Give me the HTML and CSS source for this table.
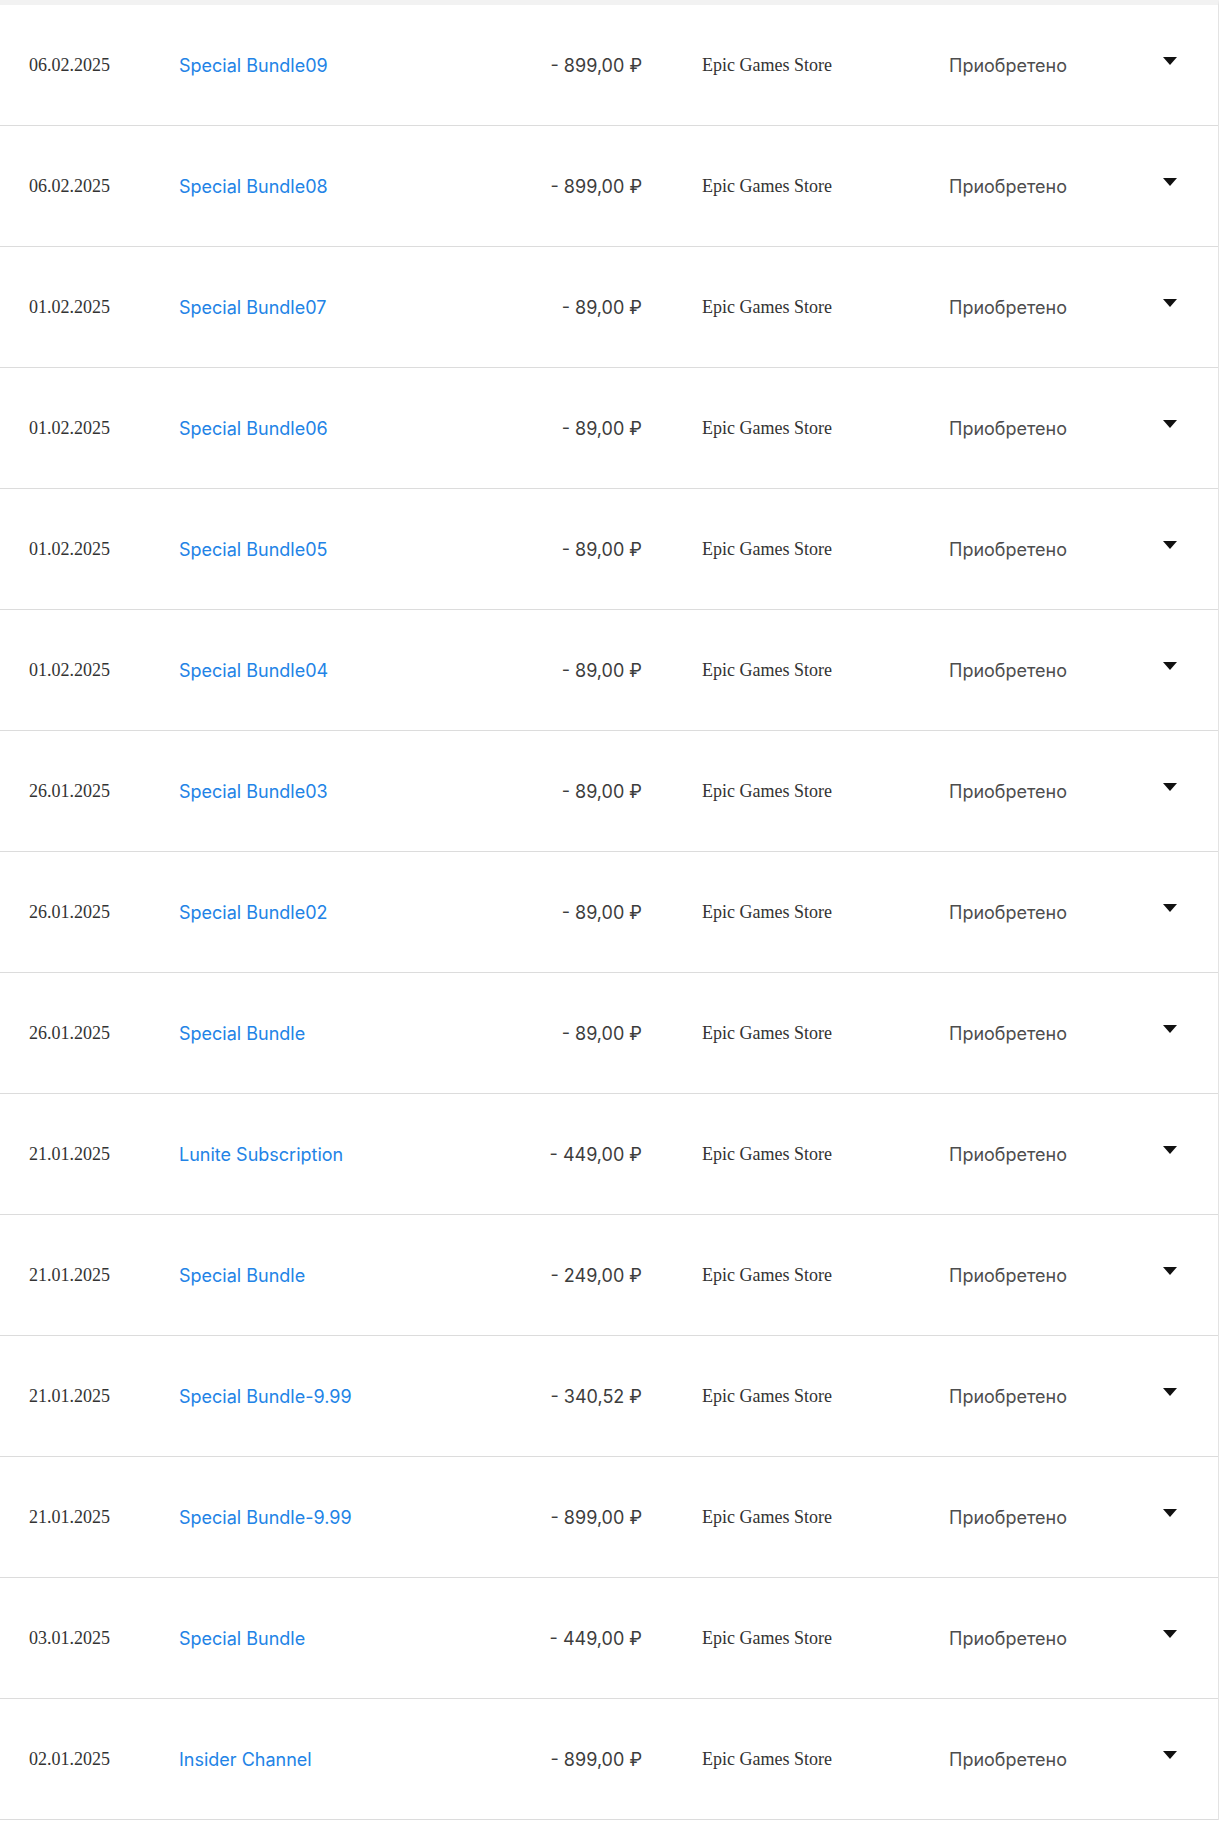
FILE: index.html
```html
<!DOCTYPE html>
<html lang="ru">
<head>
<meta charset="utf-8">
<link rel="stylesheet" href="styles.css">
</head>
<body>
<div class="list">
  <div class="row"><span class="date">06.02.2025</span><a class="name">Special Bundle09</a><span class="amount">- 899,00 ₽</span><span class="store">Epic Games Store</span><span class="status">Приобретено</span><span class="toggle"><svg width="14" height="8" viewBox="0 0 14 8"><path d="M0 0H14L7 8Z"/></svg></span></div>
  <div class="row"><span class="date">06.02.2025</span><a class="name">Special Bundle08</a><span class="amount">- 899,00 ₽</span><span class="store">Epic Games Store</span><span class="status">Приобретено</span><span class="toggle"><svg width="14" height="8" viewBox="0 0 14 8"><path d="M0 0H14L7 8Z"/></svg></span></div>
  <div class="row"><span class="date">01.02.2025</span><a class="name">Special Bundle07</a><span class="amount">- 89,00 ₽</span><span class="store">Epic Games Store</span><span class="status">Приобретено</span><span class="toggle"><svg width="14" height="8" viewBox="0 0 14 8"><path d="M0 0H14L7 8Z"/></svg></span></div>
  <div class="row"><span class="date">01.02.2025</span><a class="name">Special Bundle06</a><span class="amount">- 89,00 ₽</span><span class="store">Epic Games Store</span><span class="status">Приобретено</span><span class="toggle"><svg width="14" height="8" viewBox="0 0 14 8"><path d="M0 0H14L7 8Z"/></svg></span></div>
  <div class="row"><span class="date">01.02.2025</span><a class="name">Special Bundle05</a><span class="amount">- 89,00 ₽</span><span class="store">Epic Games Store</span><span class="status">Приобретено</span><span class="toggle"><svg width="14" height="8" viewBox="0 0 14 8"><path d="M0 0H14L7 8Z"/></svg></span></div>
  <div class="row"><span class="date">01.02.2025</span><a class="name">Special Bundle04</a><span class="amount">- 89,00 ₽</span><span class="store">Epic Games Store</span><span class="status">Приобретено</span><span class="toggle"><svg width="14" height="8" viewBox="0 0 14 8"><path d="M0 0H14L7 8Z"/></svg></span></div>
  <div class="row"><span class="date">26.01.2025</span><a class="name">Special Bundle03</a><span class="amount">- 89,00 ₽</span><span class="store">Epic Games Store</span><span class="status">Приобретено</span><span class="toggle"><svg width="14" height="8" viewBox="0 0 14 8"><path d="M0 0H14L7 8Z"/></svg></span></div>
  <div class="row"><span class="date">26.01.2025</span><a class="name">Special Bundle02</a><span class="amount">- 89,00 ₽</span><span class="store">Epic Games Store</span><span class="status">Приобретено</span><span class="toggle"><svg width="14" height="8" viewBox="0 0 14 8"><path d="M0 0H14L7 8Z"/></svg></span></div>
  <div class="row"><span class="date">26.01.2025</span><a class="name">Special Bundle</a><span class="amount">- 89,00 ₽</span><span class="store">Epic Games Store</span><span class="status">Приобретено</span><span class="toggle"><svg width="14" height="8" viewBox="0 0 14 8"><path d="M0 0H14L7 8Z"/></svg></span></div>
  <div class="row"><span class="date">21.01.2025</span><a class="name">Lunite Subscription</a><span class="amount">- 449,00 ₽</span><span class="store">Epic Games Store</span><span class="status">Приобретено</span><span class="toggle"><svg width="14" height="8" viewBox="0 0 14 8"><path d="M0 0H14L7 8Z"/></svg></span></div>
  <div class="row"><span class="date">21.01.2025</span><a class="name">Special Bundle</a><span class="amount">- 249,00 ₽</span><span class="store">Epic Games Store</span><span class="status">Приобретено</span><span class="toggle"><svg width="14" height="8" viewBox="0 0 14 8"><path d="M0 0H14L7 8Z"/></svg></span></div>
  <div class="row"><span class="date">21.01.2025</span><a class="name">Special Bundle-9.99</a><span class="amount">- 340,52 ₽</span><span class="store">Epic Games Store</span><span class="status">Приобретено</span><span class="toggle"><svg width="14" height="8" viewBox="0 0 14 8"><path d="M0 0H14L7 8Z"/></svg></span></div>
  <div class="row"><span class="date">21.01.2025</span><a class="name">Special Bundle-9.99</a><span class="amount">- 899,00 ₽</span><span class="store">Epic Games Store</span><span class="status">Приобретено</span><span class="toggle"><svg width="14" height="8" viewBox="0 0 14 8"><path d="M0 0H14L7 8Z"/></svg></span></div>
  <div class="row"><span class="date">03.01.2025</span><a class="name">Special Bundle</a><span class="amount">- 449,00 ₽</span><span class="store">Epic Games Store</span><span class="status">Приобретено</span><span class="toggle"><svg width="14" height="8" viewBox="0 0 14 8"><path d="M0 0H14L7 8Z"/></svg></span></div>
  <div class="row"><span class="date">02.01.2025</span><a class="name">Insider Channel</a><span class="amount">- 899,00 ₽</span><span class="store">Epic Games Store</span><span class="status">Приобретено</span><span class="toggle"><svg width="14" height="8" viewBox="0 0 14 8"><path d="M0 0H14L7 8Z"/></svg></span></div>
</div>
</body>
</html>
```

FILE: styles.css
```css
html, body {
  margin: 0;
  padding: 0;
  background: #ffffff;
}

.list {
  width: 1218px;
  border-top: 5px solid #f2f2f2;
  border-right: 1px solid #e3e3e3;
  background: #ffffff;
}

.row {
  display: grid;
  grid-template-columns: 150px 343px 120px 60px 247px 201px 40px;
  align-items: center;
  height: 120px;
  padding-left: 29px;
  border-bottom: 1px solid #dcdcdc;
}

.date,
.store {
  font-family: "Liberation Serif", "Times New Roman", serif;
  font-size: 18px;
  color: #333333;
}

.date { grid-column: 1; }

.name {
  grid-column: 2;
  font-family: Inter, "Noto Sans", sans-serif;
  font-size: 18px;
  color: #2283e6;
  text-decoration: none;
}

.amount {
  grid-column: 3;
  text-align: right;
  font-family: Inter, "Noto Sans", sans-serif;
  font-size: 18px;
  color: #3d3d3d;
}

.store { grid-column: 5; }

.status {
  grid-column: 6;
  font-family: Inter, "Noto Sans", sans-serif;
  font-size: 18px;
  color: #4d4d4d;
}

.toggle {
  grid-column: 7;
  display: flex;
  justify-content: center;
  margin-bottom: 8px;
}

.toggle svg {
  display: block;
  fill: #111111;
}
```
